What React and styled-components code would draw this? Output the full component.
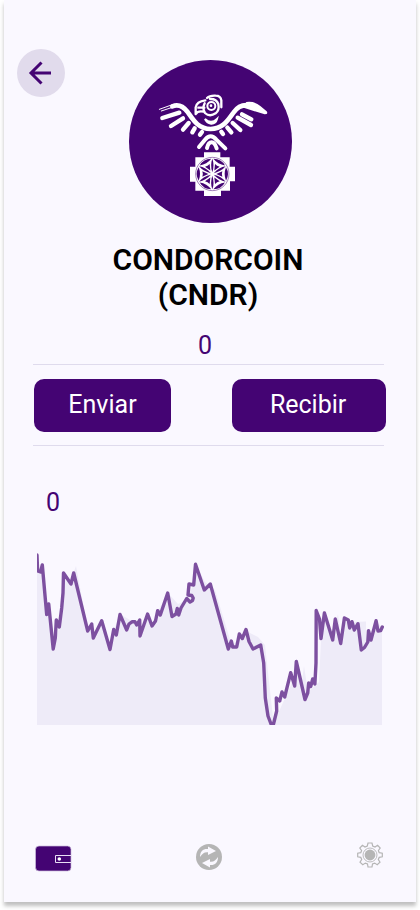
import React from "react";
import styled, { createGlobalStyle } from "styled-components";

const PURPLE = "#440473";

const GlobalStyle = createGlobalStyle`
  * { box-sizing: border-box; }
  body { margin: 0; min-height: 910px; background: #fff; font-family: Roboto, "Liberation Sans", sans-serif; }
`;

const Screen = styled.main`
  display: flex;
  flex-direction: column;
  width: 412px;
  height: 902px;
  margin: 0 auto;
  background: #faf8ff;
  box-shadow: 0 4px 4px rgba(0, 0, 0, 0.25);
`;

const Header = styled.header`
  display: grid;
  grid-template-columns: 48px 1fr 48px;
  align-items: start;
  height: 242px;
  padding: 49px 12px 0 13px;
`;

const BackButton = styled.button`
  display: grid;
  place-items: center;
  width: 48px;
  height: 48px;
  padding: 0;
  border: 0;
  border-radius: 50%;
  background: #e1dbec;
`;

const Emblem = styled.svg`
  display: block;
  width: 163px;
  height: 163px;
  margin: 11px auto 0;
`;

const Title = styled.h1`
  width: 240px;
  margin: 0 auto;
  padding-right: 4px;
  color: #000;
  font-size: 30px;
  font-weight: 600;
  line-height: 35px;
  text-align: center;
`;

const Amount = styled.div`
  color: ${PURPLE};
  font-size: 25px;
  font-weight: 400;
  line-height: 30px;
`;

const Balance = styled(Amount)`
  margin-top: 19px;
  padding-right: 10px;
  text-align: center;
`;

const Actions = styled.section`
  display: flex;
  justify-content: space-between;
  width: 351px;
  height: 82px;
  margin: 3px 0 0 29px;
  padding: 14px 0 0 1px;
  border-top: 1px solid #dfdbed;
  border-bottom: 1px solid #dfdbed;
`;

const ActionButton = styled.button`
  flex: none;
  width: ${(p) => p.$width}px;
  height: 53px;
  margin-right: ${(p) => p.$overhang || 0}px;
  padding: 0 ${(p) => p.$shift || 0}px 2px 0;
  border: 0;
  border-radius: 10px;
  background: ${PURPLE};
  color: #fff;
  font: 400 25px/30px Roboto, sans-serif;
`;

const Price = styled(Amount)`
  margin: 42px 0 0 42px;
`;

const Chart = styled.svg`
  display: block;
  width: 348px;
  height: 185px;
  margin: 22px 0 0 33px;
`;

const TabBar = styled.nav`
  display: flex;
  justify-content: space-between;
  align-items: flex-start;
  margin-top: auto;
  height: 62px;
  padding: 0 33px 0 31px;
`;

const TabIcon = styled.svg`
  display: block;
  width: ${(p) => p.$w}px;
  height: ${(p) => p.$h}px;
  margin-top: ${(p) => p.$top}px;
  margin-right: ${(p) => p.$right || 0}px;
`;

const LINE = [
  [37, 555], [37.6, 571], [40.5, 572], [42.3, 565], [46.7, 614.5], [48.7, 604], [53.2, 649],
  [55.3, 638], [56.3, 620], [59.3, 627], [61.7, 608], [63, 593], [63.5, 573], [71, 584],
  [73.7, 573], [87.7, 631], [91.7, 624], [93.3, 638], [101.7, 620.7], [110, 649.5],
  [113.7, 629.5], [116.3, 635], [120, 614.5], [126.7, 630], [129, 624], [132, 621.8],
  [135, 621.8], [136.7, 625], [139.7, 620], [140, 636], [147.6, 614], [152, 626],
  [155.5, 621], [157.7, 610.7], [160.3, 615], [167.7, 593], [172, 616.5], [176, 614],
  [177.3, 608.5], [178.7, 615], [181, 608], [186.7, 598.5], [190, 602], [192.5, 600.5],
  [193.2, 598], [191.8, 595.5], [188, 595], [189, 584], [193.7, 585], [195.5, 564.3],
  [204.3, 590], [210.3, 584], [228.3, 649], [231.3, 641], [232.7, 647], [236.7, 647],
  [239.3, 634], [242.3, 638.5], [246, 629.5], [249, 641.5], [253, 649], [260.7, 645],
  [263.7, 663], [265.3, 698], [268, 716], [271, 724], [273.5, 724], [276.7, 711],
  [276.3, 698], [279.7, 701], [282, 692], [284.7, 697], [290.7, 672.7], [294.7, 686],
  [296.3, 661.5], [305, 699.5], [307.7, 693], [308.7, 683], [310.7, 686.5], [312.7, 679],
  [314.9, 684], [316, 663], [316.2, 610.5], [319.5, 619], [321, 638.5], [324.4, 613],
  [332.7, 640], [335.3, 619], [340.7, 643.5], [344.4, 618], [348.3, 620], [349.7, 628],
  [352, 621.7], [354.3, 630], [358, 623.7], [361.3, 650], [364.5, 647.5], [367.8, 642],
  [368.5, 630.7], [371, 640], [376.1, 620.7], [378, 631], [380.7, 630.5], [382.3, 627],
];

const AREA =
  "M37 555L40 573L42 565L47 614L49 604L53 649L59 628L64 573L70 582L76 566L88 630L92 625L94 637L102 621L110 649L114 630L120 614L130 620L139 623L142 634L148 617L152 626L158 611L168 593L178 604L187 600L193 585L196 565L205 582L215 590L232 646L246 631L258 637L265 645L273 718L276 718L291 685L296 665L302 681L304 666L308 692L319 682L322 619L325 613L332 637L338 614L341 640L345 619L352 622L366 621.5L366 642L376 622L382 627V725H37Z";

function CondorEmblem() {
  return (
    <Emblem viewBox="129 60 163 163" aria-label="Condorcoin">
      <circle cx="210.5" cy="141.5" r="81.5" fill={PURPLE} />
      <g transform="translate(125 55) scale(.33333)" fill="none" stroke="#fff" strokeLinecap="round">
        <path d="M142 154C160 147 174 153 188 171C206 197 220 221 257 222C295 221 309 195 326 172C340 152 360 146 384 154" strokeWidth="14" />
        <path d="M364 141Q390 138 406 153L425 169Q431 178 419 178L386 168L356 158Z" fill="#fff" stroke="none" />
        <path d="M103 163L142 149M109 168L142 157" strokeWidth="3" />
        <path d="M112 189L163 173M138 213L174 190M174 224L191 204M202 232L209 220M225 239L231 231" strokeWidth="13" />
        <path d="M351 178L379 193M338 188L378 210M323 204L346 225M307 218L319 232M289 230L294 237" strokeWidth="13" />
        <path d="M222 276L240 254Q257 234 274 254L301 280M246 279Q250 262 260 262Q269 262 275 280" strokeWidth="12" />
        <path d="M240 192Q258 209 276 192Q272 207 258 206Q245 205 240 192Z" fill="#fff" strokeWidth="6" />
        <circle cx="259" cy="153" r="12" strokeWidth="6" />
        <circle cx="258" cy="152" r="4" fill="#fff" stroke="none" />
        <path d="M241 136Q215 139 212 157L212 177Q219 166 236 170M220 158L238 158M246 129Q254 121 272 122Q287 122 289 136L289 157M255 132Q274 131 280 147Q284 166 272 175Q254 187 240 174Q231 161 239 145" strokeWidth="7" strokeLinejoin="round" />
      </g>
      <g transform="translate(150 140) scale(.33333)">
        <path d="M162 37H211V52H239V80H255V124H240V152H213V168H162V152H136V125H120V80H136V52H162Z" fill="#fff" />
        <circle cx="187" cy="102" r="50" fill="none" stroke={PURPLE} strokeWidth="1.5" />
        {[0, 60, 120, 180, 240, 300].map((angle) => (
          <g key={angle} transform={`rotate(${angle} 187 102)`} fill={PURPLE}>
            <path d="M187 97Q180 75 187 56Q194 75 187 97Z" />
            <g transform="rotate(30 187 102)">
              <path d="M167 61Q187 49 207 61Q187 69 167 61Z" />
              <path d="M187 90L179 72Q187 75 195 72Z" />
            </g>
          </g>
        ))}
      </g>
    </Emblem>
  );
}

export default function App() {
  return (
    <>
      <GlobalStyle />
      <Screen>
        <Header>
          <BackButton aria-label="Volver">
            <svg width="48" height="48" viewBox="0 0 48 48" fill="none" stroke={PURPLE} strokeWidth="3">
              <path d="M34 24H14M24.5 13.5L14 24L24.5 34.5" />
            </svg>
          </BackButton>
          <CondorEmblem />
        </Header>
        <Title>CONDORCOIN (CNDR)</Title>
        <Balance>0</Balance>
        <Actions>
          <ActionButton $width={137}>Enviar</ActionButton>
          <ActionButton $width={154} $overhang={-1.6} $shift={1}>Recibir</ActionButton>
        </Actions>
        <Price>0</Price>
        <Chart viewBox="37 540 348 185">
          <path d={AREA} fill="#eeebf8" />
          <polyline points={LINE.join(" ")} fill="none" stroke="#7d50a0" strokeWidth="3.4" strokeLinejoin="round" strokeLinecap="round" />
        </Chart>
        <TabBar>
          <TabIcon $w={37} $h={27} $top={4.5} viewBox="0 0 37 27">
            <rect x=".5" y="1" width="35.5" height="25" rx="3.5" fill={PURPLE} stroke="#cbbddc" strokeWidth=".7" />
            <path d="M36 10.5H20.5V17.5H36" fill="none" stroke="#e9def5" />
            <circle cx="24.3" cy="14" r="1.8" fill="#fff" />
          </TabIcon>
          <TabIcon $w={26} $h={26} $top={4} $right={12} viewBox="0 0 26 26">
            <circle cx="13" cy="13" r="13" fill="#b5b5b5" />
            <path d="M4 13C4 7 7.5 4.5 12 5V2.5L20 7L12 11V8.3C8 8 6.5 9.5 4 13ZM22 13C22 19 18.5 21.5 14 21V23.5L6 19L14 15V17.7C18 18 19.5 16.5 22 13Z" fill="#faf8ff" />
          </TabIcon>
          <TabIcon $w={26} $h={26} $top={2} viewBox="0 0 26 26" fill="none" stroke="#b5b5b5">
            <path d="M11 1H15L15.7 4L18 5L20.6 3.3L23.2 6L21.4 8.5L22.2 10.7L25.3 11.2V14.8L22.2 15.4L21.3 17.5L23 20.1L20.2 22.7L17.7 21.1L15.5 22L15 25H11L10.5 22L8.3 21.1L5.8 22.7L3 20.1L4.7 17.5L3.8 15.4L.7 14.8V11.2L3.8 10.7L4.6 8.5L2.8 6L5.4 3.3L8 5L10.3 4Z" strokeWidth="1.2" />
            <circle cx="13" cy="13" r="7" strokeWidth=".9" />
            <circle cx="13" cy="13" r="5.4" fill="#b5b5b5" stroke="none" />
          </TabIcon>
        </TabBar>
      </Screen>
    </>
  );
}
